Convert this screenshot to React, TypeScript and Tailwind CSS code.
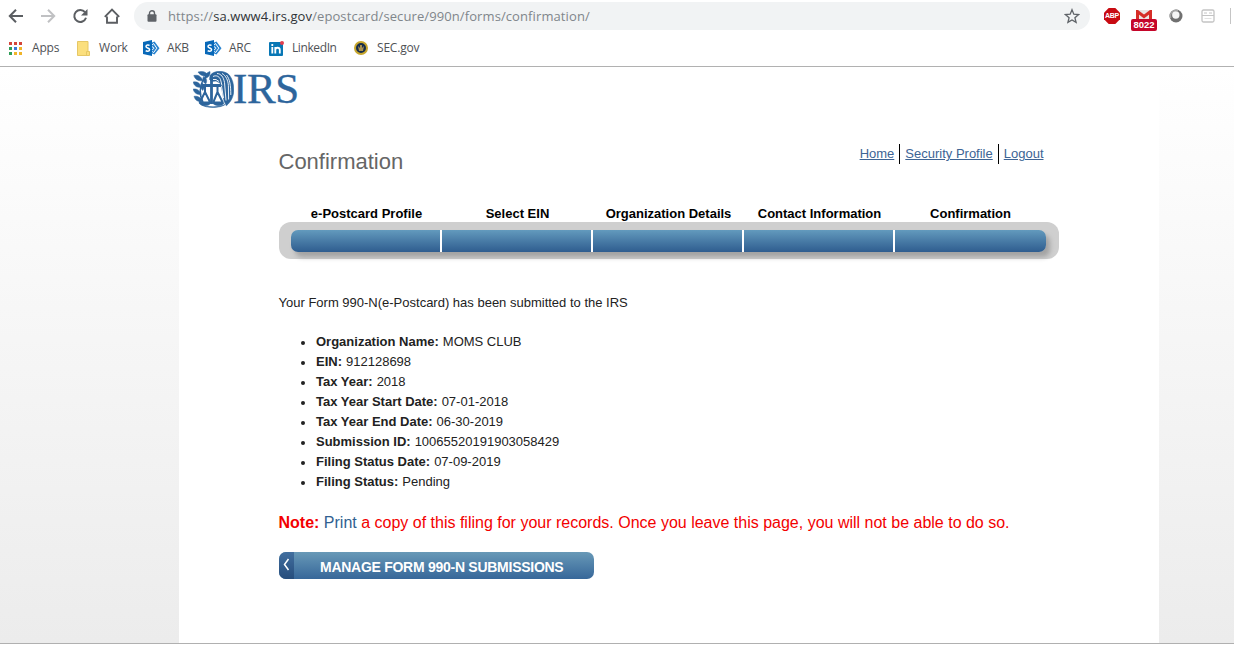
import React from "react";

const steps = ["e-Postcard Profile", "Select EIN", "Organization Details", "Contact Information", "Confirmation"];

const details = [
  ["Organization Name:", "MOMS CLUB"],
  ["EIN:", "912128698"],
  ["Tax Year:", "2018"],
  ["Tax Year Start Date:", "07-01-2018"],
  ["Tax Year End Date:", "06-30-2019"],
  ["Submission ID:", "10065520191903058429"],
  ["Filing Status Date:", "07-09-2019"],
  ["Filing Status:", "Pending"],
];

const appColors = [
  "#d4453a", "#d4453a", "#d4453a",
  "#2f9e58", "#3b78d8", "#f0b429",
  "#2f9e58", "#f0b429", "#f0b429",
];

function SharePointIcon() {
  return (
    <svg width="17" height="16" viewBox="0 0 17 16" className="shrink-0">
      <path d="M9 2.500L11.500 1.500l5 6.700-5 6.300L9 13.500z" fill="#2b84cf" />
      <path d="M9 5.200l1.500-1.700 3.300 4.700-3.300 4.500L9 11.200" fill="none" stroke="#fff" strokeWidth="1" />
      <path d="M9 6.500l2 1.700-2 2" fill="none" stroke="#fff" strokeWidth="1" />
      <path d="M0 2L9 0v16L0 14z" fill="#0868b8" />
      <path d="M6.500 5.500C5.800 4.800 3 4.600 3 6.400c0 1.700 3.600 1.400 3.600 3.300 0 2-3 1.700-3.900.9" fill="none" stroke="#fff" strokeWidth="1.500" />
    </svg>
  );
}

function IrsEmblem() {
  return (
    <svg width="41" height="37" viewBox="0 0 41 37" className="shrink-0" fill="none" stroke="#2d659c">
      <g fill="#2d659c" stroke="#2d659c" strokeWidth="0.500">
        <path d="M5 1c4.500-1.400 8.500 0 10 3.400-4 1.300-8 .1-10-3.400z" />
        <path d="M.8 4.500c4-1 7.900.8 8.700 5.200-4.500.6-7.500-1.500-8.700-5.200z" />
        <path d="M.2 11c4-.7 7.300 1.200 8 5.400C4 16.700 1 15 .2 11z" />
        <path d="M.2 18c3.800-.4 7 1.500 7.700 5.700C3.800 23.600 1 22 .2 18z" />
        <path d="M1 25.300c3.800-.5 7 1 8.500 5.500-4.500.2-7.500-1.500-8.500-5.500z" />
        <path d="M10.500 5.500c3.300 1.600 3.900 4.500 2.200 7.500-3-1.900-3.600-4.500-2.200-7.500z" />
        <path d="M17 .5c-4 1.500-5.800 3.700-5 7 3.500-1 5.500-3.500 5-7z" />
        <path d="M9.300 12c2.400 2 2.600 5 .4 7.500-2.400-2.500-2.400-5-.4-7.500z" />
        <path d="M17 4.500c4-5.500 14.500-5.500 19.300-.5 3.200 4 4.500 9 4.500 14.800 0 6.500-2.600 12-7.500 16L31 30l-2-11-2-7-4-2-4.500.5-2-2z" />
        <path d="M6 32h11.500c-1 3.500-9.500 3.800-11.500 0zM19.500 32H31c-1.500 3.500-9 3.500-11.500 0z" />
        <path d="M8 33.500c7 3 17 3 24 0-4 3.700-19 4.200-24 0z" />
      </g>
      <path d="M10.500 8C6.500 15 6 24 10 31" strokeWidth="1.500" />
      <path d="M9.500 14.500h18.500M18.500 9v24" strokeWidth="2.800" />
      <path d="M12 16v5L6.500 32M12 21l5.500 11M24.500 15v6L20 32M24.500 21L30 32M6.500 31.500H17M20 31.500h10" strokeWidth="2" />
      <g stroke="#fff" strokeWidth="0.900">
        <path d="M20 5.500c3-1.500 6-.5 7.500 3l1.500 6M24 2.500c4 .2 6.500 3.500 7.500 9l1.500 18M29 2.500c4 2 6 7 6.400 12l.2 14M33.500 4c3.200 4 4.300 10 4.300 20" />
        <path d="M20 8.500h3l3 2M28.500 15l2 12" />
      </g>
    </svg>
  );
}

function Toolbar() {
  return (
    <div className="flex h-8 items-center pl-[8px] pr-[3px]">
      <svg width="112" height="16" viewBox="0 0 112 16" fill="none" className="shrink-0" strokeWidth="2">
        <path d="M15 8H2M8 1.800L1.800 8 8 14.200" stroke="#5b5e62" />
        <path d="M33 8h13M40 1.800L46.200 8 40 14.200" stroke="#c0c1c3" />
        <path d="M77 4.200A6 6 0 1 0 78 9.800" stroke="#5b5e62" />
        <path d="M79.500 1v6.500H73z" fill="#5b5e62" />
        <path d="M99 8.500v6.300h10V8.500M96.800 8.900L104 1.700l7.200 7.200" stroke="#5b5e62" strokeWidth="1.900" />
      </svg>
      <div className="ml-[14px] flex h-[28px] w-[956px] items-center rounded-full bg-[#f1f3f4] pl-[13px] pr-[10px]">
        <svg width="10" height="12" viewBox="0 0 10 12" className="shrink-0">
          <path d="M2.500 5V3.200a2.500 2.500 0 0 1 5 0V5" fill="none" stroke="#5f6368" strokeWidth="1.400" />
          <rect x="0.500" y="4.300" width="9" height="7.500" rx="1" fill="#5f6368" />
        </svg>
        <div className="ml-[11px] flex-1 whitespace-nowrap pt-px font-['Open_Sans',sans-serif] text-[13px] tracking-[0.1px] text-[#80868b]">
          https://<span className="text-[#303337]">sa.www4.irs.gov</span>/epostcard/secure/990n/forms/confirmation/
        </div>
        <svg width="16" height="16" viewBox="0 0 16 16" className="shrink-0">
          <path d="M8 1.700l1.800 4.500 4.800.4-3.700 3.100 1.200 4.700L8 11.900l-4.100 2.500 1.200-4.700-3.700-3.100 4.800-.4z" fill="none" stroke="#5f6368" strokeWidth="1.300" />
        </svg>
      </div>
      <div className="ml-[14px] grid size-4 shrink-0 place-items-center">
        <svg width="16" height="16" viewBox="0 0 16 16" className="col-start-1 row-start-1">
          <path d="M4.700 0h6.600L16 4.700v6.600L11.300 16H4.700L0 11.300V4.700z" fill="#c80b12" />
        </svg>
        <span className="col-start-1 row-start-1 font-['Liberation_Sans',sans-serif] text-[7px] font-bold leading-[10px] tracking-[-0.2px] text-white">ABP</span>
      </div>
      <div className="ml-[11px] mt-[8px] flex w-[26px] shrink-0 flex-col items-center">
        <svg width="16" height="9" viewBox="0 0 16 9">
          <rect width="16" height="9" fill="#e9e4e4" />
          <path d="M1.500 9V1.500L8 6.500 14.500 1.500V9" fill="none" stroke="#d62d27" strokeWidth="3" />
        </svg>
        <div className="flex h-[12px] w-[26px] items-center justify-center rounded-[2px] bg-[#c5062a] font-['Liberation_Sans',sans-serif] text-[9.500px] font-bold leading-[12px] text-white">8022</div>
      </div>
      <svg width="14" height="14" viewBox="0 0 14 14" className="ml-[12px] shrink-0">
        <circle cx="7" cy="7" r="6.500" fill="#707070" />
        <path d="M1.800 9A5.800 5.800 0 0 1 9 1.500" fill="none" stroke="#a5a5a5" strokeWidth="1.500" />
        <circle cx="6.800" cy="6" r="3.700" fill="#f5f5f5" />
      </svg>
      <svg width="14" height="14" viewBox="0 0 14 14" className="ml-[18px] shrink-0" fill="none" stroke="#c4c4c4">
        <rect x="1" y="1" width="12" height="12" rx="1.500" strokeWidth="1.300" />
        <path d="M3 4h3M8 4h3M1 6.500h12" />
        <path d="M3.500 9.500h7" stroke="#e2e2e2" />
      </svg>
      <div className="ml-auto h-4 w-px bg-[#c5c5c5]" />
    </div>
  );
}

function Bookmarks() {
  return (
    <div className="flex h-[32px] items-center pl-[9px] font-['Open_Sans',sans-serif] text-[12px] text-[#4f5256]">
      <div className="grid grid-cols-[3px_3px_3px] gap-[2px]">
        {appColors.map((c, i) => (
          <span key={i} className="size-[3px]" style={{ backgroundColor: c }} />
        ))}
      </div>
      <span className="ml-[10px] w-[45px] tracking-[-0.2px]">Apps</span>
      <svg width="13" height="15" viewBox="0 0 13 15" className="shrink-0">
        <path d="M.5.500h10.500v10h1.500v4H.500z" fill="#fbdf7d" stroke="#e6c765" />
        <path d="M9.500 14v-3.500h2" fill="none" stroke="#e6c765" />
      </svg>
      <span className="ml-[9px] w-[44px] tracking-[-0.2px]">Work</span>
      <SharePointIcon />
      <span className="ml-[7px] w-[38px] tracking-[-0.3px]">AKB</span>
      <SharePointIcon />
      <span className="ml-[7px] w-[40px] tracking-[-0.3px]">ARC</span>
      <svg width="16" height="15" viewBox="0 0 16 15" className="shrink-0">
        <rect y="1" width="14" height="14" rx="1" fill="#0877b5" />
        <path d="M3.300 6v6.500M3.300 3v2M6.300 6v6.500M6.300 9c0-3 4.500-3 4.500 0v3.500" fill="none" stroke="#fff" strokeWidth="1.800" />
        <circle cx="13" cy="2" r="2" fill="#e33f4e" />
      </svg>
      <span className="ml-[7px] w-[62px] tracking-[-0.4px]">LinkedIn</span>
      <svg width="14" height="14" viewBox="0 0 14 14" className="shrink-0">
        <circle cx="7" cy="7" r="6" fill="#172d4b" stroke="#c7a62d" strokeWidth="2" />
        <path d="M4 5l2 2V4h2v3l2-2-1 5H5z" fill="#a99150" />
      </svg>
      <span className="ml-[9px] tracking-[-0.2px]">SEC.gov</span>
    </div>
  );
}

export default function App() {
  return (
    <div className="h-[648px] w-[1234px] overflow-hidden bg-white">
      <header className="h-[67px] border-b border-[#b1b1b1]">
        <Toolbar />
        <Bookmarks />
      </header>
      <main className="h-[577px] border-b border-[#b0b0b0] bg-linear-to-b from-white to-[#ececec] pl-[179px] font-['Liberation_Sans',Arial,sans-serif] text-[13px] text-[#222]">
        <div className="h-[576px] w-[980px] bg-white">
          <div className="flex h-[77px] pl-[14px] pt-[4px]">
            <IrsEmblem />
            <span className="-ml-px font-['Liberation_Serif',serif] text-[43px] leading-[35px] tracking-[-0.4px] text-[#2d659c] [-webkit-text-stroke:0.4px_#2d659c]">IRS</span>
          </div>
          <div className="flex h-[61px] justify-between pl-[99.500px] pr-[115.500px]">
            <h1 className="pt-[5px] text-[22px] leading-[26px] text-[#666]">Confirmation</h1>
            <nav className="flex h-[20px] leading-[20px] text-[#3d6494]">
              <a className="mr-[5px] underline">Home</a>
              <a className="border-l border-black px-[5px] underline">Security Profile</a>
              <a className="border-l border-black pl-[5px] underline">Logout</a>
            </nav>
          </div>
          <section className="ml-[100px] w-[780px]">
            <div className="grid h-[17px] grid-cols-[151px_151px_151px_151px_151px] pl-[12px] text-center font-bold leading-[18px] text-black">
              {steps.map((s) => (
                <div key={s}>{s}</div>
              ))}
            </div>
            <div className="h-[37px] rounded-[12px] bg-[#cfcfcf] px-[12px] pt-[8px]">
              <div className="flex h-[22px] w-[755px] overflow-hidden rounded-[7px] bg-linear-to-b from-[#639abd] to-[#2f5d8f] shadow-[4px_5px_5px_#a3a3a3]">
                {steps.map((s) => (
                  <div key={s} className="w-[151px] border-r-2 border-white last:border-r-0" />
                ))}
              </div>
            </div>
          </section>
          <p className="pl-[99.500px] pt-[34px] leading-[20px]">Your Form 990-N(e-Postcard) has been submitted to the IRS</p>
          <ul className="mt-[19px] pl-[137px]">
            {details.map(([label, value]) => (
              <li key={label} className="flex h-[20px] leading-[20px]">
                <span className="-ml-[15px] mr-[11px] mt-[9px] size-[4px] rounded-full bg-[#222]" />
                <b className="mr-1">{label}</b>
                {value}
              </li>
            ))}
          </ul>
          <p className="mt-[19px] whitespace-nowrap pl-[99.500px] text-[16px] leading-[24px] text-[#f30000]">
            <b>Note:</b> <span className="text-[#315f91]">Print</span> a copy of this filing for your records. Once you leave this page, you will not be able to do so.
          </p>
          <button className="ml-[100px] mt-[17px] flex h-[27px] w-[315px] overflow-hidden rounded-[7px] bg-linear-to-b from-[#6899b7] to-[#376799] text-[14px] font-bold text-white">
            <span className="flex h-full w-[15px] justify-center bg-linear-to-b from-[#426f9f] to-[#264d7c] pt-[6px]">
              <svg width="7" height="13" viewBox="0 0 7 13" fill="none" stroke="#fff" strokeWidth="1.500"><path d="M5.500 1L1.500 6.500l4 5.500" /></svg>
            </span>
            <span className="whitespace-nowrap pl-[26px] pt-[5px] leading-[20px] tracking-[-0.27px]">MANAGE FORM 990-N SUBMISSIONS</span>
          </button>
        </div>
      </main>
    </div>
  );
}
